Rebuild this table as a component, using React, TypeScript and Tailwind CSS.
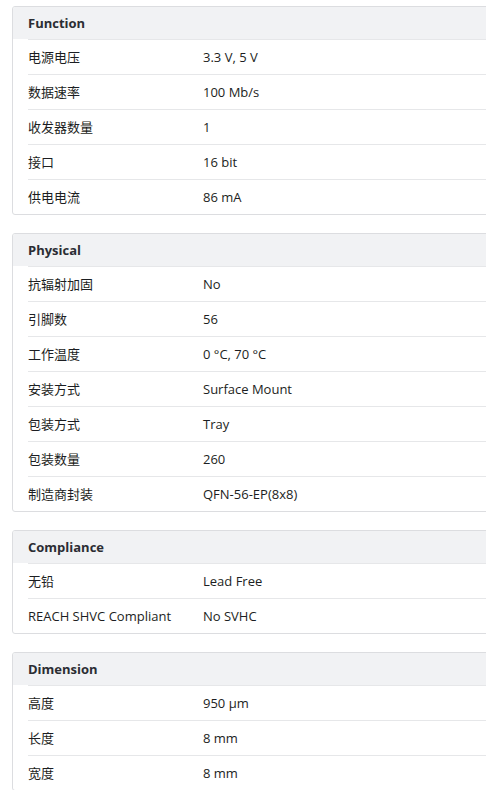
const sections: { title: string; rows: [string, string][] }[] = [
  {
    title: "Function",
    rows: [
      ["电源电压", "3.3 V, 5 V"],
      ["数据速率", "100 Mb/s"],
      ["收发器数量", "1"],
      ["接口", "16 bit"],
      ["供电电流", "86 mA"],
    ],
  },
  {
    title: "Physical",
    rows: [
      ["抗辐射加固", "No"],
      ["引脚数", "56"],
      ["工作温度", "0 °C, 70 °C"],
      ["安装方式", "Surface Mount"],
      ["包装方式", "Tray"],
      ["包装数量", "260"],
      ["制造商封装", "QFN-56-EP(8x8)"],
    ],
  },
  {
    title: "Compliance",
    rows: [
      ["无铅", "Lead Free"],
      ["REACH SHVC Compliant", "No SVHC"],
    ],
  },
  {
    title: "Dimension",
    rows: [
      ["高度", "950 µm"],
      ["长度", "8 mm"],
      ["宽度", "8 mm"],
    ],
  },
];

const SpecCard = ({ title, rows }: { title: string; rows: [string, string][] }) => (
  <div className="w-[490px] overflow-hidden rounded-[3px] border border-[#dcdde0] bg-white">
    <div className="flex h-[32px] items-center bg-[#f1f2f4] px-[15px] pt-[2px] text-[13px] font-bold text-[#2b2d33]">
      {title}
    </div>
    {rows.map(([label, value]) => (
      <div key={label} className="pl-[15px]">
        <div className="flex h-[35px] items-center border-t border-[#e6e7e9] pt-[2px] text-[13px] text-[#1c1e22]">
          <span className="w-[175px] shrink-0">{label}</span>
          <span>{value}</span>
        </div>
      </div>
    ))}
  </div>
);

export default function App() {
  return (
    <div
      className="flex min-h-[790px] flex-col gap-[18px] overflow-hidden bg-white pl-3 pt-[6px]"
      style={{ fontFamily: '"Open Sans", "Noto Sans CJK SC", sans-serif' }}
    >
      {sections.map((s) => (
        <SpecCard key={s.title} title={s.title} rows={s.rows} />
      ))}
    </div>
  );
}
